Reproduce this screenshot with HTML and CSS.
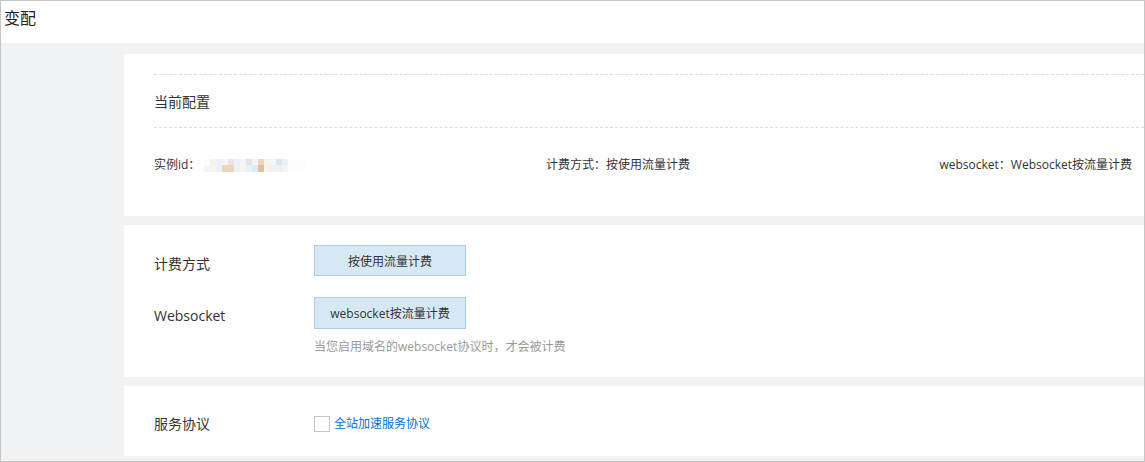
FILE: index.html
```html
<!DOCTYPE html>
<html lang="zh-CN">
<head>
    <meta charset="UTF-8">
    <meta name="viewport" content="width=device-width, initial-scale=1.0">
    <title>变配</title>
    <link rel="stylesheet" href="styles.css">
</head>
<body>
    <div class="frame">
        <div class="header">变配</div>

        <div class="main">
            <div class="card card-current">
                <div class="dash"></div>
                <div class="section-title">当前配置</div>
                <div class="dash"></div>
                <div class="info-row">
                    <div class="info">实例id：<span class="mosaic">
                        <i></i><i class="a"></i><i class="b"></i><i class="f"></i><i class="c"></i><i class="b"></i><i class="f"></i><i class="d"></i><i class="g"></i><i class="e"></i><i class="g"></i><i class="f"></i><i class="d"></i><i class="b"></i><i></i><i></i><i></i>
                        <i class="f"></i><i class="f"></i><i class="b"></i><i class="e"></i><i class="e"></i><i class="b"></i><i class="f"></i><i class="b"></i><i class="h"></i><i class="e2"></i><i class="g"></i><i class="b"></i><i class="b"></i><i class="f"></i><i></i><i></i><i></i>
                    </span></div>
                    <div class="info">计费方式：按使用流量计费</div>
                    <div class="info">websocket：Websocket按流量计费</div>
                </div>
            </div>

            <div class="card card-form">
                <div class="form-row">
                    <div class="label">计费方式</div>
                    <div class="field">
                        <button class="option">按使用流量计费</button>
                    </div>
                </div>
                <div class="form-row">
                    <div class="label">Websocket</div>
                    <div class="field">
                        <button class="option">websocket按流量计费</button>
                        <div class="hint">当您启用域名的websocket协议时，才会被计费</div>
                    </div>
                </div>
            </div>

            <div class="card card-agree">
                <div class="form-row center">
                    <div class="label">服务协议</div>
                    <div class="field check">
                        <span class="checkbox"></span>
                        <a href="#" class="link">全站加速服务协议</a>
                    </div>
                </div>
            </div>
        </div>
    </div>
</body>
</html>
```

FILE: styles.css
```css
* {
    box-sizing: border-box;
}

body {
    margin: 0;
    font-family: "Open Sans", "Noto Sans CJK SC", sans-serif;
    color: #333;
}

.frame {
    width: 1145px;
    height: 462px;
    border: 1px solid #c6c6c6;
    background-color: #f1f2f4;
    display: flex;
    flex-direction: column;
}

.header {
    height: 42px;
    background-color: #fff;
    padding-left: 3px;
    font-size: 16px;
    line-height: 35px;
    color: #222;
}

.main {
    padding: 11px 0 0 123px;
    display: flex;
    flex-direction: column;
    gap: 9px;
}

.card {
    background-color: #fff;
    padding: 20px 0 0 30px;
}

.card-current {
    height: 162px;
}

.dash {
    border-top: 1px dashed #dcdcdc;
}

.section-title {
    height: 52px;
    line-height: 53px;
    font-size: 14px;
}

.info-row {
    display: grid;
    grid-template-columns: 392px 1fr auto;
    padding: 28px 12px 0 0;
    font-size: 12px;
    line-height: 18px;
}

.info {
    display: flex;
    align-items: center;
}

.mosaic {
    display: grid;
    grid-template-columns: repeat(17, 6px);
    grid-auto-rows: 6.5px;
    margin-left: 4px;
}

.mosaic i { background-color: #fdfdfd; }
.mosaic i.a { background-color: #fcf1e6; }
.mosaic i.b { background-color: #eaf2f8; }
.mosaic i.c { background-color: #efe2e4; }
.mosaic i.d { background-color: #dde5ec; }
.mosaic i.e { background-color: #ead6bb; }
.mosaic i.e2 { background-color: #ddc1a0; }
.mosaic i.f { background-color: #f5f5f4; }
.mosaic i.g { background-color: #f8f3e6; }
.mosaic i.h { background-color: #dfeaf7; }

.card-form {
    height: 152px;
    display: flex;
    flex-direction: column;
    gap: 21px;
}

.form-row {
    display: flex;
    align-items: flex-start;
}

.form-row.center {
    align-items: center;
}

.label {
    width: 160px;
    height: 31px;
    font-size: 14px;
    line-height: 25px;
    padding-top: 6px;
}

.center .label {
    height: auto;
    padding-top: 0;
    line-height: 16px;
}

.option {
    display: block;
    width: 152px;
    height: 32px;
    background-color: #d7e8f5;
    border: 1px solid #a9cfec;
    font-family: inherit;
    font-size: 12px;
    color: #333;
    padding: 0;
    cursor: pointer;
}

.form-row:first-child .option {
    height: 31px;
}

.hint {
    margin-top: 9px;
    font-size: 12px;
    line-height: 18px;
    color: #999;
}

.card-agree {
    height: 70px;
    padding-top: 30px;
}

.check {
    display: flex;
    align-items: center;
    gap: 4px;
}

.checkbox {
    width: 16px;
    height: 16px;
    border: 1px solid #c3c6cc;
    background-color: #fff;
}

.link {
    font-size: 12px;
    line-height: 16px;
    color: #0070cc;
    text-decoration: none;
}
```
